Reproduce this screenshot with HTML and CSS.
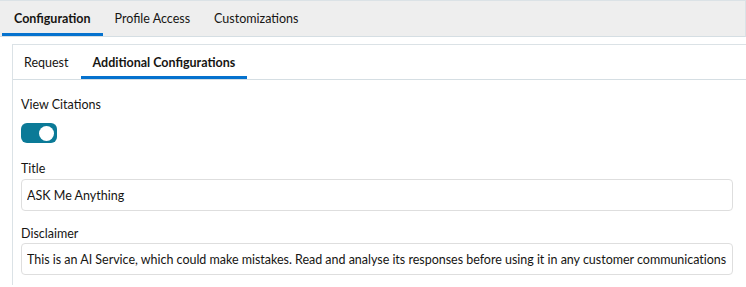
FILE: index.html
```html
<!DOCTYPE html>
<html lang="en">
<head>
    <meta charset="UTF-8">
    <meta name="viewport" content="width=device-width, initial-scale=1.0">
    <title>Additional Configurations</title>
    <link rel="stylesheet" href="styles.css">
</head>
<body>
    <div class="main-tabs">
        <div class="tab active">Configuration</div>
        <div class="tab">Profile Access</div>
        <div class="tab">Customizations</div>
    </div>

    <div class="panel">
        <div class="sub-tabs">
            <div class="sub-tab">Request</div>
            <div class="sub-tab active">Additional Configurations</div>
        </div>

        <div class="form">
            <div class="field field-toggle">
                <label>View Citations</label>
                <div class="toggle on"><span class="knob"></span></div>
            </div>
            <div class="field">
                <label for="title">Title</label>
                <input type="text" id="title" value="ASK Me Anything">
            </div>
            <div class="field">
                <label for="disclaimer">Disclaimer</label>
                <input type="text" id="disclaimer" class="disclaimer" value="This is an AI Service, which could make mistakes. Read and analyse its responses before using it in any customer communications">
            </div>
        </div>
    </div>
</body>
</html>
```

FILE: styles.css
```css
body {
    margin: 0;
    font-family: Lato, "Noto Sans", sans-serif;
    font-size: 12.5px;
    color: #161513;
    background-color: #ffffff;
}
.main-tabs {
    display: flex;
    height: 35px;
    padding-left: 2px;
    background-color: #eeeeee;
    border-top: 1px solid #dbe2e6;
    border-bottom: 1px solid #d5dee3;
    border-right: 1px solid #dbe2e6;
}
.tab {
    display: flex;
    align-items: center;
    padding: 0 12px;
    border-bottom: 3px solid transparent;
    padding-top: 3px;
}
.tab.active {
    font-weight: bold;
    border-bottom-color: #0572ce;
}
.panel {
    margin: 7px 0 0 12px;
    border-top: 1px solid #dbe2e6;
    border-left: 1px solid #dbe2e6;
    min-height: 240px;
}
.sub-tabs {
    display: flex;
    height: 34px;
    border-bottom: 1px solid #d5dee3;
}
.sub-tab {
    display: flex;
    align-items: center;
    padding: 3px 12px 0 11px;
    border-bottom: 3px solid transparent;
}
.sub-tab.active {
    font-weight: bold;
    padding-left: 12px;
    border-bottom-color: #0572ce;
}
.form {
    padding: 16px 13px 0 8px;
}
.field {
    display: flex;
    flex-direction: column;
    margin-bottom: 14px;
}
.field label {
    line-height: 16px;
    padding-top: 1px;
    margin-bottom: 2px;
}
.field-toggle {
    margin-bottom: 17px;
}
.field-toggle label {
    margin-bottom: 10px;
}
.toggle {
    width: 36px;
    height: 20px;
    border-radius: 6px;
    background-color: #0b7a97;
    display: flex;
    align-items: center;
    justify-content: flex-end;
    padding-right: 3px;
    box-sizing: border-box;
}
.knob {
    width: 15px;
    height: 15px;
    border-radius: 50%;
    background-color: #ffffff;
}
input[type="text"] {
    height: 32px;
    box-sizing: border-box;
    border: 1px solid #dedede;
    border-radius: 4px;
    padding: 0 5px;
    font-family: inherit;
    font-size: 12.5px;
    color: #161513;
    outline: none;
}
.disclaimer {
    margin-top: -1px;
    letter-spacing: -0.02px;
}
```
